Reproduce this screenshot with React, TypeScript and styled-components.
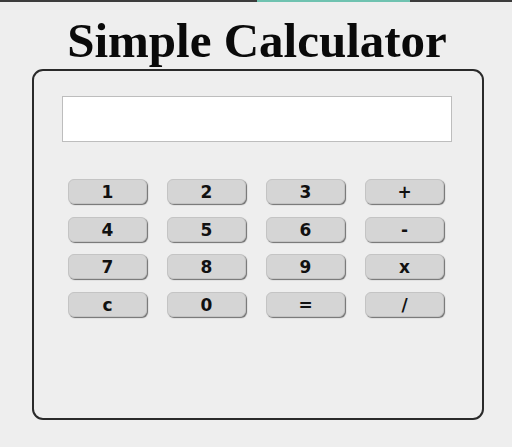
import React from 'react';
import styled, { createGlobalStyle } from 'styled-components';

const keys = ['1', '2', '3', '+', '4', '5', '6', '-', '7', '8', '9', 'x', 'c', '0', '=', '/'];

const GlobalStyle = createGlobalStyle`
  html, body {
    margin: 0;
    padding: 0;
    background-color: #eeeeee;
  }
`;

export default function App() {
  return (
    <Page>
      <GlobalStyle />
      <TopBar>
        <TopBarPart $width="257px" $color="#3c3c3c" />
        <TopBarPart $width="153px" $color="#6fc2b0" />
        <TopBarPart $width="auto" $color="#3c3c3c" />
      </TopBar>
      <Title>Simple Calculator</Title>
      <Calculator>
        <Display type="text" readOnly />
        <Keypad>
          {keys.map((k) => (
            <Key key={k} type="button">
              {k}
            </Key>
          ))}
        </Keypad>
      </Calculator>
    </Page>
  );
}

const Page = styled.div`
  width: 512px;
  height: 447px;
  background-color: #eeeeee;
  overflow: hidden;
`;

const TopBar = styled.div`
  display: flex;
  height: 2px;
`;

const TopBarPart = styled.div<{ $width: string; $color: string }>`
  width: ${(p) => p.$width};
  flex: ${(p) => (p.$width === 'auto' ? '1' : 'none')};
  background-color: ${(p) => p.$color};
`;

const Title = styled.h1`
  margin: 12px 0 2px;
  font-family: 'Liberation Serif', 'Times New Roman', serif;
  font-weight: bold;
  font-size: 49px;
  line-height: 53px;
  text-align: center;
  color: #0a0a0a;
  padding-left: 2px;
`;

const Calculator = styled.div`
  box-sizing: border-box;
  margin-left: 31.5px;
  width: 452px;
  height: 351px;
  border: 2px solid #2a2a2a;
  border-radius: 11px;
  padding: 25px 0 0 28.5px;
`;

const Display = styled.input`
  display: block;
  box-sizing: border-box;
  width: 390px;
  height: 46px;
  margin: 0;
  border: 1px solid #bdbdbd;
  background-color: #ffffff;
  outline: none;
`;

const Keypad = styled.div`
  display: grid;
  grid-template-columns: repeat(4, 79px);
  grid-auto-rows: 25px;
  column-gap: 20px;
  row-gap: 12.5px;
  margin: 37px 0 0 6px;
`;

const Key = styled.button`
  box-sizing: border-box;
  margin: 0;
  padding: 2px 0 0;
  border: 1px solid #c4c4c4;
  border-radius: 6px;
  background-color: #d5d5d5;
  box-shadow: 1px 1px 1px #6e6e6e;
  font-family: 'DejaVu Sans', Verdana, sans-serif;
  font-weight: bold;
  font-size: 17px;
  line-height: 21px;
  color: #111;
  cursor: pointer;
`;
